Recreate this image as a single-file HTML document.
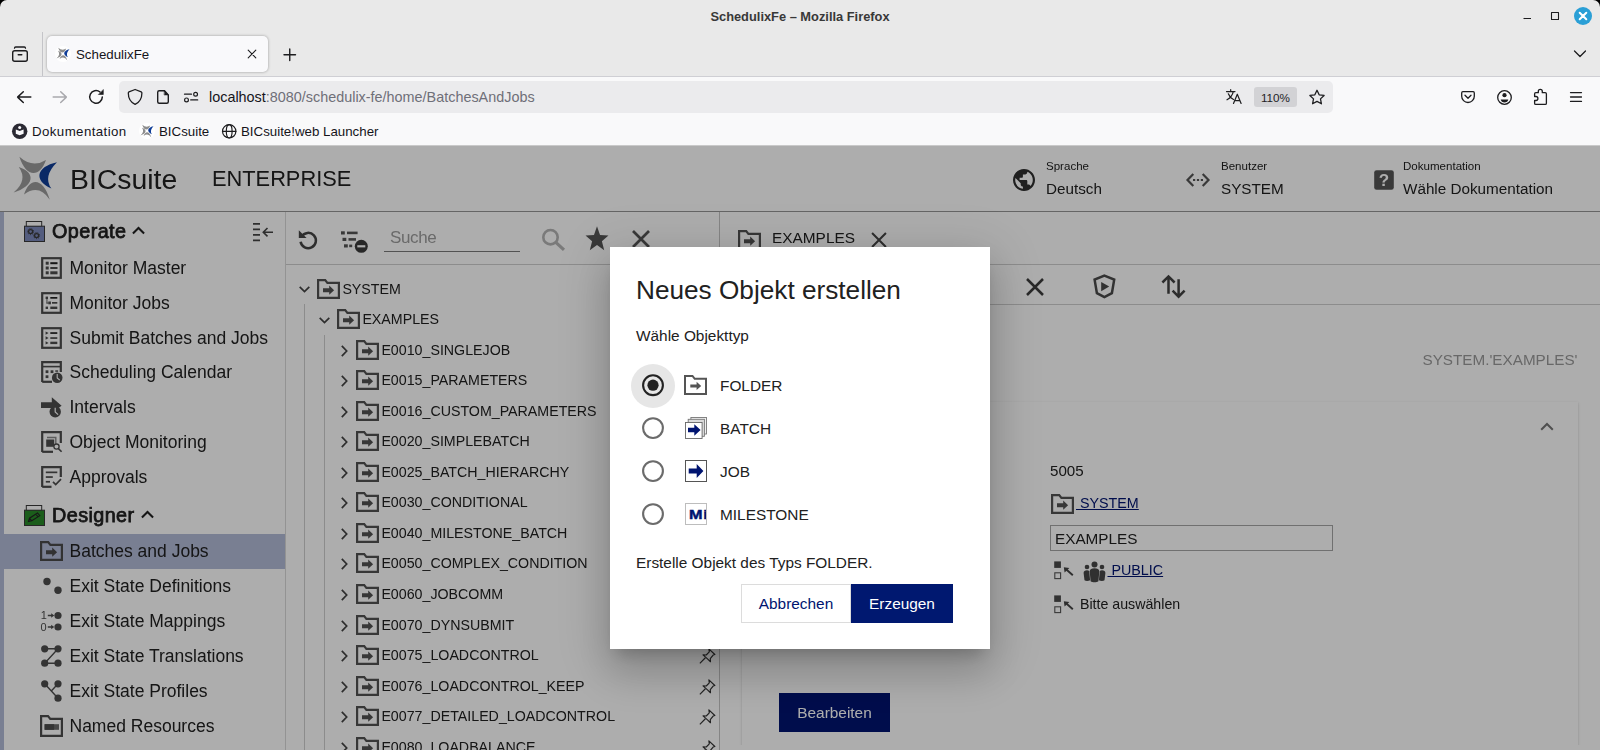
<!DOCTYPE html>
<html lang="de">
<head>
<meta charset="utf-8">
<title>SchedulixFe</title>
<style>
*{box-sizing:border-box;margin:0;padding:0}
html,body{width:1600px;height:750px;overflow:hidden;background:#000;font-family:"Liberation Sans",sans-serif;color:#15141a}
.abs{position:absolute}
#win{position:absolute;left:0;top:0;width:1600px;height:750px;background:#e9e9e9;border-radius:7px 7px 0 0;overflow:hidden}
/* ---------- browser chrome ---------- */
#title{position:absolute;left:0;top:0;width:1600px;height:32px;text-align:center;font-weight:bold;font-size:12.850px;line-height:33px;color:#383838}
#tabbar{position:absolute;left:0;top:32px;width:1600px;height:44px;background:#e9e9e9}
#tab{position:absolute;left:47px;top:36px;width:221px;height:36px;background:#f9f9fb;border-radius:5px;box-shadow:0 0 3px rgba(0,0,0,.35)}
#tab .t{position:absolute;left:29px;top:0;line-height:37px;font-size:13.3px;color:#15141a}
#navbar{position:absolute;left:0;top:76px;width:1600px;height:69px;background:#f9f9fa;border-top:1px solid #cfcfd4}
#url{position:absolute;left:119px;top:81px;width:1214px;height:32px;background:#ebebed;border-radius:5px}
#url .u{position:absolute;left:90px;top:0;line-height:32px;font-size:14.400px;color:#6f6f78;white-space:nowrap}
#url .u b{font-weight:normal;color:#15141a}
#zoom{position:absolute;left:1254px;top:87px;width:43px;height:20px;background:#d2d2d5;border-radius:3px;font-size:11.700px;line-height:21.500px;text-align:center;color:#1f1e26}
.bm{position:absolute;top:118px;height:27px;line-height:27px;font-size:13.3px;color:#15141a;white-space:nowrap}
svg{position:absolute;overflow:visible}

/* ---------- page ---------- */
#page{position:absolute;left:0;top:145px;width:1600px;height:605px;background:#fff;overflow:hidden;will-change:transform}
#page div{white-space:nowrap}
.hl{font-size:11.550px;line-height:14px;color:#212121}
.hv{font-size:15.250px;line-height:20px;color:#212121}
.sh{font-size:19.800px;font-weight:normal;letter-spacing:0.420px;-webkit-text-stroke:0.750px #212121;line-height:28px;color:#212121}
.si{font-size:17.500px;line-height:24px;color:#212121}
.tr{font-size:14.220px;line-height:18px;color:#212121}
.lk{font-size:14.300px;line-height:20px;color:#001470;text-decoration:underline}
#dlgsh{position:absolute;left:610px;top:247px;width:380px;height:402px;background:#fff;box-shadow:0 11px 15px -7px rgba(0,0,0,.2),0 24px 38px 3px rgba(0,0,0,.14),0 9px 46px 8px rgba(0,0,0,.12)}
#dlg{position:absolute;left:610px;top:247px;width:380px;height:402px;background:#fff}
.dt{font-size:15.400px;line-height:20px;color:#212121;white-space:nowrap}
</style>
</head>
<body>
<svg width="0" height="0" style="position:absolute"><defs>
  <g id="logo">
<path d="M14.40 6.80C20.65 27.03 34.48 28.70 41.00 10.00Q27.50 18.50 14.40 6.80z" fill="#8d8d8d"/>
<path d="M13.80 17.00C31.62 22.88 28.91 36.19 8.60 42.60Q23.20 30.20 13.80 17.00z" fill="#8d8d8d"/>
<path d="M19.00 44.40C25.33 25.83 38.74 28.64 44.80 49.80Q34.10 33.50 19.00 44.40z" fill="#8d8d8d"/>
<path d="M52.00 12.20C31.19 16.67 28.28 30.40 46.40 38.60Q37.60 26.60 52.00 12.20z" fill="#0f3d97"/>
</g>
</defs></svg>
<div id="win">
  <div id="title">SchedulixFe – Mozilla Firefox</div>
  <div id="tabbar"></div>
  <div class="abs" style="left:42px;top:32px;width:1px;height:44px;background:#c4c4c8"></div>
  <div id="tab"><div class="t">SchedulixFe</div></div>
  <div id="navbar"></div>
  <div id="url"><div class="u"><b>localhost</b>:8080/schedulix-fe/home/BatchesAndJobs</div></div>
  <div id="zoom">110%</div>
  <div class="bm" style="left:32px;letter-spacing:0.400px">Dokumentation</div>
  <div class="bm" style="left:159px">BICsuite</div>
  <div class="bm" style="left:241px">BICsuite!web Launcher</div>
  
  <!-- window controls -->
  <svg style="left:0;top:0" width="1600" height="146" viewBox="0 0 1600 146" fill="none" stroke="#1d1d1f" stroke-linecap="round" stroke-linejoin="round">
    <path d="M1523.5 18.5h7.5" stroke-width="1.1" stroke-linecap="butt"/>
    <rect x="1551.5" y="12.5" width="7" height="7" stroke-width="1.1"/>
    <circle cx="1583" cy="16" r="9" fill="#2a9fd6" stroke="none"/>
    <path d="M1579.7 12.7l6.6 6.6M1586.3 12.7l-6.6 6.6" stroke="#fff" stroke-width="2"/>
    <path d="M1574.5 51l5.5 5.5 5.5-5.500" stroke-width="1.3"/>
    <!-- firefox view -->
    <rect x="12.7" y="50.7" width="14.6" height="10.6" rx="2" stroke-width="1.4"/>
    <path d="M14.5 48.2q0-1.200 1.200-1.200h8.600q1.200 0 1.200 1.200" stroke-width="1.3"/>
    <path d="M18.200 54.800h3.600" stroke-width="1.4"/>
    <!-- tab close / new tab -->
    <path d="M248.200 50.200l7.600 7.600M255.800 50.200l-7.600 7.600" stroke-width="1.100"/>
    <path d="M284 54.700h11.500M289.750 49v11.500" stroke-width="1.400"/>
    <!-- back -->
    <path d="M30.800 97.100H17.600M23.300 91.700l-5.700 5.400 5.700 5.400" stroke-width="1.500"/>
    <!-- forward (disabled) -->
    <path d="M53.200 97.100h13.200M60.700 91.700l5.700 5.400-5.700 5.400" stroke="#a9a9ad" stroke-width="1.500"/>
    <!-- reload -->
    <path d="M102.300 96.900a6.300 6.300 0 1 1-2.300-4.900" stroke-width="1.500"/>
    <path d="M103.300 89.900v4.600h-4.600z" fill="#1d1d1f" stroke-width="0.600"/>
    <!-- shield -->
    <path d="M135.100 89.500l6.100 2.400q.700.300.700 1c0 5.400-2.400 9.300-6.800 11.400-4.400-2.100-6.800-6-6.800-11.400q0-.700.700-1z" stroke-width="1.300"/>
    <!-- page -->
    <path d="M164.500 90.700h-5.300q-1.500 0-1.500 1.500v9.600q0 1.500 1.500 1.500h7.600q1.500 0 1.500-1.500v-6.800z" stroke-width="1.400"/>
    <path d="M164.500 90.700l3.800 4.300h-3.800z" fill="#1d1d1f" stroke-width="0.500"/>
    <!-- permissions -->
    <path d="M184.500 94.200h7" stroke-width="1.200"/>
    <circle cx="195.600" cy="94.200" r="1.900" stroke-width="1.200"/>
    <path d="M190.700 99.900h7" stroke-width="1.200"/>
    <circle cx="186.500" cy="99.900" r="1.900" stroke-width="1.200"/>
    <!-- translate -->
    <g stroke-width="1.200">
      <path d="M1226.500 91.600h8.500M1230.700 89.700v1.900M1233.300 91.600c-.8 3.600-3 6.300-6.300 8.200M1228.300 93.800c1 2.600 2.800 4.500 5.200 5.700"/>
      <path d="M1233.500 103.500l3.800-9.300 3.800 9.300M1234.800 100.700h5"/>
    </g>
    <!-- star -->
    <path d="M1317 90.300l2.150 4.500 4.950.65-3.600 3.400.9 4.900-4.400-2.400-4.400 2.400.9-4.900-3.600-3.400 4.950-.65z" stroke-width="1.300"/>
    <!-- pocket -->
    <path d="M1462.900 91.700h10.200q1.200 0 1.200 1.200v3.300a6.300 6.300 0 0 1-12.600 0v-3.300q0-1.200 1.200-1.200z" stroke-width="1.300"/>
    <path d="M1465 95.300l3 2.900 3-2.900" stroke-width="1.300"/>
    <!-- account -->
    <circle cx="1504.500" cy="97.500" r="6.800" stroke-width="1.300"/>
    <circle cx="1504.500" cy="95.200" r="2.100" fill="#1d1d1f" stroke="none"/>
    <path d="M1500.700 99.500h7.600a3.900 3.900 0 0 1-7.600 0z" fill="#1d1d1f" stroke="none"/>
    <!-- extensions -->
    <path d="M1538.300 92.700v-1.300a2 2 0 0 1 4 0v1.300h2.900q1.200 0 1.200 1.200v9.300q0 1.200-1.200 1.200h-9.400q-1.200 0-1.200-1.200v-2.700h1.300a2 2 0 0 0 0-4h-1.300v-2.600q0-1.200 1.200-1.200z" stroke-width="1.300"/>
    <!-- menu -->
    <path d="M1570.500 92.600h11M1570.500 97h11M1570.500 101.400h11" stroke-width="1.300"/>
    <!-- bookmark icons -->
    <circle cx="19.700" cy="131.300" r="7.700" fill="#2b2a33" stroke="none"/>
    <path d="M15.800 129.500l3.900 1.500 3.900-1.500v4.200l-3.900 1.500-3.900-1.500z" fill="#f9f9fb" stroke="none"/>
    <circle cx="19.700" cy="127.600" r="1.500" fill="#f9f9fb" stroke="none"/>
    <g stroke-width="1.200">
      <circle cx="229.200" cy="131.300" r="6.700"/>
      <ellipse cx="229.200" cy="131.300" rx="2.900" ry="6.700"/>
      <path d="M222.500 131.300h13.400"/>
    </g>
  </svg>
  <!-- favicons -->
  <svg style="left:55px;top:46px" width="16" height="16" viewBox="0 0 16 16"><circle cx="8" cy="8" r="8" fill="#fff"/><use href="#logo" transform="translate(-1.100 -0.400) scale(0.300)"/></svg>
  <svg style="left:139px;top:123px" width="16" height="16" viewBox="0 0 16 16"><circle cx="8" cy="8" r="8" fill="#fff"/><use href="#logo" transform="translate(-1.100 -0.400) scale(0.300)"/></svg>
  <!--CHROME-ICONS-END-->
  <div id="page">
<div class="abs" style="left:0;top:1px;width:1600px;height:66px;background:#fff;border-bottom:1px solid #969696"></div>
<svg style="left:5px;top:5px" width="70" height="60" viewBox="0 0 70 60">
<path d="M14.40 6.80C20.65 27.03 34.48 28.70 41.00 10.00Q27.50 18.50 14.40 6.80z" fill="#9b9b9b"/>
<path d="M13.80 17.00C31.62 22.88 28.91 36.19 8.60 42.60Q23.20 30.20 13.80 17.00z" fill="#9b9b9b"/>
<path d="M19.00 44.40C25.33 25.83 38.74 28.64 44.80 49.80Q34.10 33.50 19.00 44.40z" fill="#9b9b9b"/>
<path d="M52.00 12.20C31.19 16.67 28.28 30.40 46.40 38.60Q37.60 26.60 52.00 12.20z" fill="#0f3d97"/>
</svg>
<div class="abs" style="left:70px;top:16.800px;font-size:28.400px;line-height:34px;color:#212121">BICsuite</div>
<div class="abs" style="left:212px;top:20.100px;font-size:21.800px;line-height:28px;color:#212121">ENTERPRISE</div>
<svg style="left:1012px;top:23px" width="24" height="24" viewBox="0 0 24 24"><path fill="#2e2e2e" d="M12 1C5.930 1 1 5.930 1 12s4.930 11 11 11 11-4.930 11-11S18.070 1 12 1zm-1.100 19.720C6.560 20.180 3.200 16.480 3.200 12c0-.68.090-1.330.230-1.970L8.700 15.300v1.100c0 1.210.990 2.200 2.200 2.200v2.120zm7.590-2.790c-.290-.890-1.100-1.530-2.090-1.530h-1.100v-3.300c0-.600-.500-1.100-1.100-1.100H7.600V9.800h2.200c.600 0 1.100-.500 1.100-1.100V6.500h2.200c1.210 0 2.200-.990 2.200-2.200v-.450c3.220 1.310 5.500 4.470 5.500 8.150 0 2.290-.880 4.370-2.310 5.930z"/></svg>
<div class="abs hl" style="left:1046px;top:14px">Sprache</div>
<div class="abs hv" style="left:1046px;top:34px">Deutsch</div>
<svg style="left:1186px;top:28px" width="24" height="14" viewBox="0 0 24 14" fill="none" stroke="#555" stroke-width="2.200"><path d="M7.300 1L1.500 7l5.800 6M16.700 1l5.800 6-5.800 6"/><path d="M7 7h2.200M10.900 7h2.200M14.800 7h2.200" stroke-width="2.200"/></svg>
<div class="abs hl" style="left:1221px;top:14px">Benutzer</div>
<div class="abs hv" style="left:1221px;top:34px">SYSTEM</div>
<svg style="left:1374px;top:25px" width="20" height="20" viewBox="0 0 20 20"><rect x="0.200" y="0.200" width="19.600" height="19.600" rx="2.400" fill="#555"/><text x="10" y="16.200" font-family="Liberation Sans, sans-serif" font-weight="bold" font-size="17" text-anchor="middle" fill="#fff">?</text></svg>
<div class="abs hl" style="left:1403px;top:14px">Dokumentation</div>
<div class="abs hv" style="left:1403px;top:34px">Wähle Dokumentation</div>
<div class="abs" style="left:0;top:67px;width:4px;height:538px;background:#b3bbd8"></div>
<div class="abs" style="left:285px;top:67px;width:1px;height:538px;background:#d9d9d9"></div>
<div class="abs" style="left:4px;top:389px;width:281px;height:34.500px;background:#b3bbd8"></div>
<div class="abs sh" style="left:52px;top:71.800px">Operate</div>
<div class="abs sh" style="left:52px;top:356.300px">Designer</div>
<svg style="left:132px;top:81px" width="13" height="8.500" viewBox="0 0 14 9" fill="none" stroke="#212121" stroke-width="2.200"><path d="M1 8l6-6 6 6"/></svg>
<svg style="left:141px;top:365px" width="13" height="8.500" viewBox="0 0 14 9" fill="none" stroke="#212121" stroke-width="2.200"><path d="M1 8l6-6 6 6"/></svg>
<svg style="left:24px;top:76px" width="21" height="21" viewBox="0 0 21 21" fill="none" stroke="#3a3a3a"><rect x="2.300" y="0.500" width="15.400" height="5" stroke-width="1"/><rect x="0.500" y="5.200" width="20" height="15.300" fill="#7c89bc" stroke-width="1"/><g stroke-width="1.300"><circle cx="6.600" cy="10.600" r="2"/><circle cx="12.600" cy="14.600" r="2"/></g><g stroke-width="1" stroke-dasharray="1 1.100"><circle cx="6.600" cy="10.600" r="3"/><circle cx="12.600" cy="14.600" r="3"/></g></svg>
<svg style="left:24px;top:360px" width="21" height="21" viewBox="0 0 21 21" fill="none" stroke="#3a3a3a"><rect x="2.300" y="0.500" width="15.400" height="5" stroke-width="1"/><rect x="0.500" y="5.200" width="20" height="15.300" fill="#288a28" stroke-width="1"/><path d="M4.500 16.500l1-3.300 8-5.200 2.300 2.600-8 5.200zM12 9.300l2.200 2.700M5.500 13.200l2.300 2.600" stroke-width="1.100" stroke="#222"/></svg>
<svg style="left:252px;top:77px" width="22" height="21" viewBox="0 0 22 21" fill="none" stroke="#444" stroke-width="1.600"><path d="M1 1.900h7M1 7.400h7M1 12.900h7M1 18.400h7" stroke-width="1.800"/><path d="M21 10.200h-9.500M15.500 6L11.300 10.200l4.200 4.200"/></svg>
<div class="abs si" style="left:69.500px;top:111px">Monitor Master</div>
<svg style="left:41px;top:112px" width="21" height="22" viewBox="0 0 21 22" fill="none"><rect x="1.200" y="1.200" width="18.600" height="19.600" stroke="#4d4d4d" stroke-width="2.200" fill="none"/><g fill="#4d4d4d"><rect x="4.700" y="4.700" width="3" height="3"/><rect x="4.700" y="9.500" width="3" height="3"/><rect x="4.700" y="14.300" width="3" height="3"/><rect x="9.300" y="5.200" width="7.200" height="2" fill="#222"/><rect x="9.300" y="10" width="7.200" height="2"/><rect x="9.300" y="14.300" width="7.200" height="3"/></g></svg>
<div class="abs si" style="left:69.500px;top:146px">Monitor Jobs</div>
<svg style="left:41px;top:147px" width="21" height="22" viewBox="0 0 21 22" fill="none"><rect x="1.200" y="1.200" width="18.600" height="19.600" stroke="#4d4d4d" stroke-width="2.200" fill="none"/><g fill="#4d4d4d"><rect x="4.600" y="4.600" width="2.400" height="2.400"/><rect x="7.300" y="9.500" width="2.600" height="2.800"/><rect x="4.600" y="14.600" width="2.400" height="2.400"/><rect x="9.300" y="5" width="7" height="1.700" fill="#222"/><rect x="11" y="10" width="5.300" height="1.700"/><rect x="9.300" y="14.600" width="7" height="2.400"/><rect x="5.500" y="7" width="0.900" height="4.500"/><rect x="5.500" y="10.600" width="2" height="0.900"/></g></svg>
<div class="abs si" style="left:69.500px;top:181px">Submit Batches and Jobs</div>
<svg style="left:41px;top:182px" width="21" height="22" viewBox="0 0 21 22" fill="none"><rect x="1.200" y="1.200" width="18.600" height="19.600" stroke="#4d4d4d" stroke-width="2.200" fill="none"/><g fill="#4d4d4d"><path d="M4.600 4.400l3 1.700-3 1.700zM4.600 9.300l3 1.700-3 1.700zM4.600 14.200l3 1.700-3 1.700z"/><rect x="9.300" y="5.200" width="7" height="1.700" fill="#222"/><rect x="9.300" y="10.200" width="7" height="1.700"/><rect x="9.300" y="14.700" width="7" height="2.400"/></g></svg>
<div class="abs si" style="left:69.500px;top:215px">Scheduling Calendar</div>
<svg style="left:41px;top:216px" width="21" height="22" viewBox="0 0 21 22" fill="none"><path d="M1.200 21V1.200h18.600V11" stroke="#4d4d4d" stroke-width="2.200" fill="none"/><path d="M1.200 20.800H11" stroke="#4d4d4d" stroke-width="2.200"/><rect x="2" y="4.800" width="17" height="1.600" fill="#4d4d4d"/><g fill="#4d4d4d"><rect x="4.600" y="9.300" width="2.800" height="2.800"/><rect x="9.600" y="9.300" width="2.800" height="2.800"/><rect x="14.300" y="9.300" width="2.800" height="1.500"/><rect x="4.600" y="14.300" width="2.800" height="2.800"/></g><circle cx="16.200" cy="16.700" r="5.300" fill="#4d4d4d"/><path d="M16.200 13v3.900l2.600 2.300" stroke="#fff" stroke-width="1.100" fill="none"/></svg>
<div class="abs si" style="left:69.500px;top:250px">Intervals</div>
<svg style="left:41px;top:251px" width="21" height="22" viewBox="0 0 21 22" fill="none"><path d="M0 6.200h10.800V1.200l9.800 8.600-3.200 2.200H0z" fill="#4d4d4d"/><circle cx="14.200" cy="15.800" r="5.700" fill="#4d4d4d"/><path d="M14.200 11.700v4.300l2.900 2.600" stroke="#fff" stroke-width="1.200" fill="none"/></svg>
<div class="abs si" style="left:69.500px;top:285px">Object Monitoring</div>
<svg style="left:41px;top:286px" width="21" height="22" viewBox="0 0 21 22" fill="none"><path d="M1.200 21V1.200h18.600V12" stroke="#4d4d4d" stroke-width="2.200" fill="none"/><path d="M1.200 20.800H12" stroke="#4d4d4d" stroke-width="2.200"/><path d="M5.200 8.500h8v7.300h-8z" fill="#4d4d4d"/><path d="M6 6.500h8.800v7" stroke="#888" stroke-width="1.400" fill="none"/><circle cx="15.500" cy="15.600" r="2.600" stroke="#4d4d4d" stroke-width="1.300" fill="#fff"/><path d="M17.400 17.600l3.200 3.200" stroke="#4d4d4d" stroke-width="1.600"/></svg>
<div class="abs si" style="left:69.500px;top:320px">Approvals</div>
<svg style="left:41px;top:321px" width="21" height="22" viewBox="0 0 21 22" fill="none"><path d="M1.200 21V1.200h18.600V11" stroke="#4d4d4d" stroke-width="2.200" fill="none"/><path d="M1.200 20.800H10.500" stroke="#4d4d4d" stroke-width="2.200"/><g fill="#4d4d4d"><rect x="4.800" y="5.500" width="11.500" height="1.700"/><rect x="4.800" y="10.200" width="7" height="1.700"/><rect x="4.800" y="14.900" width="4.200" height="1.700"/></g><path d="M12 15.800l2.700 2.700 5.300-5.300" stroke="#4d4d4d" stroke-width="1.700" fill="none"/></svg>
<div class="abs si" style="left:69.500px;top:394px">Batches and Jobs</div>
<svg style="left:40px;top:396px" width="23" height="20" viewBox="0 0 23 20" fill="none"><path d="M1.100 18.900V1.100h7.100l2.200 2.800h11.500v15z" stroke="#4a4a4a" stroke-width="2.2" stroke-linejoin="miter"/><path d="M6 9.200h6.200V6.600l4.900 4.600-4.900 4.600v-2.600H6z" fill="#4a4a4a"/></svg>
<div class="abs si" style="left:69.500px;top:429px">Exit State Definitions</div>
<svg style="left:41px;top:430px" width="21" height="22" viewBox="0 0 21 22" fill="none"><circle cx="6" cy="6.500" r="3.700" fill="#4d4d4d"/><circle cx="17" cy="15.200" r="3.700" fill="#4d4d4d"/></svg>
<div class="abs si" style="left:69.500px;top:464px">Exit State Mappings</div>
<svg style="left:41px;top:465px" width="21" height="22" viewBox="0 0 21 22" fill="none"><g fill="#4d4d4d"><circle cx="17" cy="5.500" r="3.600"/><circle cx="17" cy="17" r="3.600"/><path d="M6.800 4.800h3.400V3.300l3 2.200-3 2.200V6.200H6.800zM6.800 16.300h3.400v-1.500l3 2.200-3 2.200v-1.500H6.800z"/></g><text x="-0.300" y="9.300" font-size="11" fill="#4d4d4d" font-family="Liberation Sans, sans-serif">1</text><text x="-0.500" y="21" font-size="11" fill="#4d4d4d" font-family="Liberation Sans, sans-serif">0</text></svg>
<div class="abs si" style="left:69.500px;top:499px">Exit State Translations</div>
<svg style="left:41px;top:500px" width="21" height="22" viewBox="0 0 21 22" fill="none"><g fill="#4d4d4d"><circle cx="3.700" cy="3.800" r="3.600"/><circle cx="17" cy="3.800" r="3.600"/><circle cx="3.700" cy="18.200" r="3.600"/><circle cx="17" cy="18.200" r="3.600"/></g><path d="M3.700 3.800H17L3.700 18.200H17" stroke="#4d4d4d" stroke-width="1.400" fill="none"/></svg>
<div class="abs si" style="left:69.500px;top:534px">Exit State Profiles</div>
<svg style="left:41px;top:535px" width="21" height="22" viewBox="0 0 21 22" fill="none"><g fill="#4d4d4d"><circle cx="3.700" cy="3.800" r="3.600"/><circle cx="17" cy="3.800" r="3.600"/><circle cx="17" cy="18.200" r="3.600"/></g><path d="M3.700 3.800L17 18.200M17 3.800l-6.700 7.200" stroke="#4d4d4d" stroke-width="1.400" fill="none"/></svg>
<div class="abs si" style="left:69.500px;top:569px">Named Resources</div>
<svg style="left:40px;top:570px" width="23" height="22" viewBox="0 0 23 22" fill="none"><path d="M1.100 20.900V1.100h6.900l2.300 2.800h11.600v17z" stroke="#4d4d4d" stroke-width="2.200" fill="none" stroke-linejoin="miter"/><rect x="4.600" y="9.200" width="14.400" height="5.600" fill="#6a6a6a"/><rect x="4.600" y="9.200" width="9.500" height="5.600" fill="#4d4d4d"/></svg>
<div class="abs" style="left:286px;top:119px;width:433px;height:1px;background:#cfcfcf"></div>
<div class="abs" style="left:719px;top:67px;width:1px;height:538px;background:#c4c4c4"></div>
<svg style="left:298px;top:84px" width="21" height="22" viewBox="0 0 21 22" fill="none" stroke="#444" stroke-width="2.500"><path d="M3.600 7.600A7.700 7.700 0 1 1 2.600 12.800"/><path d="M0.800 1.200V9h7.800z" fill="#444" stroke="none"/></svg>
<svg style="left:341px;top:86px" width="28" height="23" viewBox="0 0 28 23"><g fill="#555"><rect x="0" y="0.300" width="3.800" height="3.200"/><rect x="6" y="0.600" width="10.600" height="2.600"/><rect x="1.500" y="6.800" width="3.800" height="3.200"/><rect x="7.500" y="7.100" width="7.500" height="2.600"/><rect x="3" y="13.300" width="3.800" height="3.200"/><rect x="8.200" y="13.600" width="3" height="2.600"/></g><circle cx="20.300" cy="15.300" r="6.500" fill="#3a3a3a"/><rect x="16.300" y="14.200" width="8" height="2.200" fill="#fff"/></svg>
<div class="abs" style="left:390px;top:81.300px;font-size:17px;line-height:24px;color:#9c9c9c;letter-spacing:-0.350px">Suche</div>
<div class="abs" style="left:384px;top:106px;width:136px;height:1px;background:#7a7a7a"></div>
<svg style="left:541px;top:83px" width="25" height="24" viewBox="0 0 25 24" fill="none" stroke="#b4b4b4"><circle cx="9.500" cy="9.200" r="7.200" stroke-width="2.600"/><path d="M14.800 14.300l8.200 7.600" stroke-width="3.200"/></svg>
<svg style="left:584.500px;top:81px" width="24" height="25" viewBox="0 0 23 22" preserveAspectRatio="none"><path d="M11.500 0.300l2.900 7.600 8.100.4-6.300 5.100 2.200 7.900-6.900-4.500-6.900 4.500 2.200-7.900L.5 8.300l8.100-.4z" fill="#555"/></svg>
<svg style="left:632px;top:85px" width="18" height="18" viewBox="0 0 18 18" fill="none" stroke="#555" stroke-width="2.700"><path d="M1 1l16 16M17 1L1 17"/></svg>
<div class="abs" style="left:304px;top:159px;width:1px;height:446px;background:#cfcfcf"></div>
<div class="abs" style="left:324px;top:190px;width:1px;height:415px;background:#cfcfcf"></div>
<svg style="left:299px;top:141px" width="11" height="7" viewBox="0 0 11 7" fill="none" stroke="#444" stroke-width="1.700"><path d="M0.700 0.800l4.800 4.800 4.800-4.800"/></svg>
<svg style="left:317px;top:134px" width="23" height="20" viewBox="0 0 23 20" fill="none"><path d="M1.100 18.900V1.100h7.100l2.200 2.800h11.500v15z" stroke="#525252" stroke-width="2.2" stroke-linejoin="miter"/><path d="M6 9.200h6.200V6.600l4.900 4.600-4.900 4.600v-2.600H6z" fill="#525252"/></svg>
<div class="abs tr" style="left:342.400px;top:135px">SYSTEM</div>
<svg style="left:319px;top:172px" width="11" height="7" viewBox="0 0 11 7" fill="none" stroke="#444" stroke-width="1.700"><path d="M0.700 0.800l4.800 4.800 4.800-4.800"/></svg>
<svg style="left:337px;top:164px" width="23" height="20" viewBox="0 0 23 20" fill="none"><path d="M1.100 18.900V1.100h7.100l2.200 2.800h11.500v15z" stroke="#525252" stroke-width="2.2" stroke-linejoin="miter"/><path d="M6 9.200h6.200V6.600l4.900 4.600-4.900 4.600v-2.600H6z" fill="#525252"/></svg>
<div class="abs tr" style="left:362.400px;top:165px">EXAMPLES</div>
<svg style="left:341px;top:200px" width="7" height="12" viewBox="0 0 7 12" fill="none" stroke="#444" stroke-width="1.700"><path d="M0.800 0.900l4.900 5.100-4.900 5.100"/></svg>
<svg style="left:356px;top:195px" width="23" height="20" viewBox="0 0 23 20" fill="none"><path d="M1.100 18.900V1.100h7.100l2.200 2.800h11.500v15z" stroke="#525252" stroke-width="2.2" stroke-linejoin="miter"/><path d="M6 9.200h6.200V6.600l4.900 4.600-4.900 4.600v-2.600H6z" fill="#525252"/></svg>
<div class="abs tr" style="left:381.400px;top:196px">E0010_SINGLEJOB</div>
<svg style="left:699px;top:198px" width="17" height="17" viewBox="0 0 16 16" fill="none" stroke="#333" stroke-width="1.100" stroke-linejoin="round"><path d="M9.300 0.800l5.600 5.300-1.600.5-2.700 3.300.2 3-2.800-2.700L3.800 6.500l3 .1 2.900-3z"/><path d="M6 9.200L0.800 14.500"/></svg>
<svg style="left:341px;top:230px" width="7" height="12" viewBox="0 0 7 12" fill="none" stroke="#444" stroke-width="1.700"><path d="M0.800 0.900l4.900 5.100-4.900 5.100"/></svg>
<svg style="left:356px;top:225px" width="23" height="20" viewBox="0 0 23 20" fill="none"><path d="M1.100 18.900V1.100h7.100l2.200 2.800h11.500v15z" stroke="#525252" stroke-width="2.2" stroke-linejoin="miter"/><path d="M6 9.200h6.200V6.600l4.900 4.600-4.900 4.600v-2.600H6z" fill="#525252"/></svg>
<div class="abs tr" style="left:381.400px;top:226px">E0015_PARAMETERS</div>
<svg style="left:699px;top:228px" width="17" height="17" viewBox="0 0 16 16" fill="none" stroke="#333" stroke-width="1.100" stroke-linejoin="round"><path d="M9.300 0.800l5.600 5.300-1.600.5-2.700 3.300.2 3-2.800-2.700L3.800 6.500l3 .1 2.900-3z"/><path d="M6 9.200L0.800 14.500"/></svg>
<svg style="left:341px;top:261px" width="7" height="12" viewBox="0 0 7 12" fill="none" stroke="#444" stroke-width="1.700"><path d="M0.800 0.900l4.900 5.100-4.900 5.100"/></svg>
<svg style="left:356px;top:256px" width="23" height="20" viewBox="0 0 23 20" fill="none"><path d="M1.100 18.900V1.100h7.100l2.200 2.800h11.500v15z" stroke="#525252" stroke-width="2.2" stroke-linejoin="miter"/><path d="M6 9.200h6.200V6.600l4.900 4.600-4.900 4.600v-2.600H6z" fill="#525252"/></svg>
<div class="abs tr" style="left:381.400px;top:257px">E0016_CUSTOM_PARAMETERS</div>
<svg style="left:699px;top:259px" width="17" height="17" viewBox="0 0 16 16" fill="none" stroke="#333" stroke-width="1.100" stroke-linejoin="round"><path d="M9.300 0.800l5.600 5.300-1.600.5-2.700 3.300.2 3-2.800-2.700L3.800 6.500l3 .1 2.900-3z"/><path d="M6 9.200L0.800 14.500"/></svg>
<svg style="left:341px;top:291px" width="7" height="12" viewBox="0 0 7 12" fill="none" stroke="#444" stroke-width="1.700"><path d="M0.800 0.900l4.900 5.100-4.900 5.100"/></svg>
<svg style="left:356px;top:286px" width="23" height="20" viewBox="0 0 23 20" fill="none"><path d="M1.100 18.900V1.100h7.100l2.200 2.800h11.500v15z" stroke="#525252" stroke-width="2.2" stroke-linejoin="miter"/><path d="M6 9.200h6.200V6.600l4.900 4.600-4.900 4.600v-2.600H6z" fill="#525252"/></svg>
<div class="abs tr" style="left:381.400px;top:287px">E0020_SIMPLEBATCH</div>
<svg style="left:699px;top:289px" width="17" height="17" viewBox="0 0 16 16" fill="none" stroke="#333" stroke-width="1.100" stroke-linejoin="round"><path d="M9.300 0.800l5.600 5.300-1.600.5-2.700 3.300.2 3-2.800-2.700L3.800 6.500l3 .1 2.900-3z"/><path d="M6 9.200L0.800 14.500"/></svg>
<svg style="left:341px;top:322px" width="7" height="12" viewBox="0 0 7 12" fill="none" stroke="#444" stroke-width="1.700"><path d="M0.800 0.900l4.900 5.100-4.900 5.100"/></svg>
<svg style="left:356px;top:317px" width="23" height="20" viewBox="0 0 23 20" fill="none"><path d="M1.100 18.900V1.100h7.100l2.200 2.800h11.500v15z" stroke="#525252" stroke-width="2.2" stroke-linejoin="miter"/><path d="M6 9.200h6.200V6.600l4.900 4.600-4.900 4.600v-2.600H6z" fill="#525252"/></svg>
<div class="abs tr" style="left:381.400px;top:318px">E0025_BATCH_HIERARCHY</div>
<svg style="left:699px;top:320px" width="17" height="17" viewBox="0 0 16 16" fill="none" stroke="#333" stroke-width="1.100" stroke-linejoin="round"><path d="M9.300 0.800l5.600 5.300-1.600.5-2.700 3.300.2 3-2.800-2.700L3.800 6.500l3 .1 2.900-3z"/><path d="M6 9.200L0.800 14.500"/></svg>
<svg style="left:341px;top:352px" width="7" height="12" viewBox="0 0 7 12" fill="none" stroke="#444" stroke-width="1.700"><path d="M0.800 0.900l4.900 5.100-4.900 5.100"/></svg>
<svg style="left:356px;top:347px" width="23" height="20" viewBox="0 0 23 20" fill="none"><path d="M1.100 18.900V1.100h7.100l2.200 2.800h11.500v15z" stroke="#525252" stroke-width="2.2" stroke-linejoin="miter"/><path d="M6 9.200h6.200V6.600l4.900 4.600-4.900 4.600v-2.600H6z" fill="#525252"/></svg>
<div class="abs tr" style="left:381.400px;top:348px">E0030_CONDITIONAL</div>
<svg style="left:699px;top:350px" width="17" height="17" viewBox="0 0 16 16" fill="none" stroke="#333" stroke-width="1.100" stroke-linejoin="round"><path d="M9.300 0.800l5.600 5.300-1.600.5-2.700 3.300.2 3-2.800-2.700L3.800 6.500l3 .1 2.900-3z"/><path d="M6 9.200L0.800 14.500"/></svg>
<svg style="left:341px;top:383px" width="7" height="12" viewBox="0 0 7 12" fill="none" stroke="#444" stroke-width="1.700"><path d="M0.800 0.900l4.900 5.100-4.900 5.100"/></svg>
<svg style="left:356px;top:378px" width="23" height="20" viewBox="0 0 23 20" fill="none"><path d="M1.100 18.900V1.100h7.100l2.200 2.800h11.500v15z" stroke="#525252" stroke-width="2.2" stroke-linejoin="miter"/><path d="M6 9.200h6.200V6.600l4.900 4.600-4.900 4.600v-2.600H6z" fill="#525252"/></svg>
<div class="abs tr" style="left:381.400px;top:379px">E0040_MILESTONE_BATCH</div>
<svg style="left:699px;top:381px" width="17" height="17" viewBox="0 0 16 16" fill="none" stroke="#333" stroke-width="1.100" stroke-linejoin="round"><path d="M9.300 0.800l5.600 5.300-1.600.5-2.700 3.300.2 3-2.800-2.700L3.800 6.500l3 .1 2.900-3z"/><path d="M6 9.200L0.800 14.500"/></svg>
<svg style="left:341px;top:413px" width="7" height="12" viewBox="0 0 7 12" fill="none" stroke="#444" stroke-width="1.700"><path d="M0.800 0.900l4.900 5.100-4.900 5.100"/></svg>
<svg style="left:356px;top:408px" width="23" height="20" viewBox="0 0 23 20" fill="none"><path d="M1.100 18.900V1.100h7.100l2.200 2.800h11.500v15z" stroke="#525252" stroke-width="2.2" stroke-linejoin="miter"/><path d="M6 9.200h6.200V6.600l4.900 4.600-4.900 4.600v-2.600H6z" fill="#525252"/></svg>
<div class="abs tr" style="left:381.400px;top:409px">E0050_COMPLEX_CONDITION</div>
<svg style="left:699px;top:411px" width="17" height="17" viewBox="0 0 16 16" fill="none" stroke="#333" stroke-width="1.100" stroke-linejoin="round"><path d="M9.300 0.800l5.600 5.300-1.600.5-2.700 3.300.2 3-2.800-2.700L3.800 6.500l3 .1 2.900-3z"/><path d="M6 9.200L0.800 14.500"/></svg>
<svg style="left:341px;top:444px" width="7" height="12" viewBox="0 0 7 12" fill="none" stroke="#444" stroke-width="1.700"><path d="M0.800 0.900l4.900 5.100-4.900 5.100"/></svg>
<svg style="left:356px;top:439px" width="23" height="20" viewBox="0 0 23 20" fill="none"><path d="M1.100 18.900V1.100h7.100l2.200 2.800h11.500v15z" stroke="#525252" stroke-width="2.2" stroke-linejoin="miter"/><path d="M6 9.200h6.200V6.600l4.900 4.600-4.900 4.600v-2.600H6z" fill="#525252"/></svg>
<div class="abs tr" style="left:381.400px;top:440px">E0060_JOBCOMM</div>
<svg style="left:699px;top:442px" width="17" height="17" viewBox="0 0 16 16" fill="none" stroke="#333" stroke-width="1.100" stroke-linejoin="round"><path d="M9.300 0.800l5.600 5.300-1.600.5-2.700 3.300.2 3-2.800-2.700L3.800 6.500l3 .1 2.900-3z"/><path d="M6 9.200L0.800 14.500"/></svg>
<svg style="left:341px;top:475px" width="7" height="12" viewBox="0 0 7 12" fill="none" stroke="#444" stroke-width="1.700"><path d="M0.800 0.900l4.900 5.100-4.900 5.100"/></svg>
<svg style="left:356px;top:470px" width="23" height="20" viewBox="0 0 23 20" fill="none"><path d="M1.100 18.900V1.100h7.100l2.200 2.800h11.500v15z" stroke="#525252" stroke-width="2.2" stroke-linejoin="miter"/><path d="M6 9.200h6.200V6.600l4.900 4.600-4.900 4.600v-2.600H6z" fill="#525252"/></svg>
<div class="abs tr" style="left:381.400px;top:471px">E0070_DYNSUBMIT</div>
<svg style="left:699px;top:473px" width="17" height="17" viewBox="0 0 16 16" fill="none" stroke="#333" stroke-width="1.100" stroke-linejoin="round"><path d="M9.300 0.800l5.600 5.300-1.600.5-2.700 3.300.2 3-2.800-2.700L3.800 6.500l3 .1 2.900-3z"/><path d="M6 9.200L0.800 14.500"/></svg>
<svg style="left:341px;top:505px" width="7" height="12" viewBox="0 0 7 12" fill="none" stroke="#444" stroke-width="1.700"><path d="M0.800 0.900l4.900 5.100-4.900 5.100"/></svg>
<svg style="left:356px;top:500px" width="23" height="20" viewBox="0 0 23 20" fill="none"><path d="M1.100 18.900V1.100h7.100l2.200 2.800h11.500v15z" stroke="#525252" stroke-width="2.2" stroke-linejoin="miter"/><path d="M6 9.200h6.200V6.600l4.900 4.600-4.900 4.600v-2.600H6z" fill="#525252"/></svg>
<div class="abs tr" style="left:381.400px;top:501px">E0075_LOADCONTROL</div>
<svg style="left:699px;top:503px" width="17" height="17" viewBox="0 0 16 16" fill="none" stroke="#333" stroke-width="1.100" stroke-linejoin="round"><path d="M9.300 0.800l5.600 5.300-1.600.5-2.700 3.300.2 3-2.800-2.700L3.800 6.500l3 .1 2.900-3z"/><path d="M6 9.200L0.800 14.500"/></svg>
<svg style="left:341px;top:536px" width="7" height="12" viewBox="0 0 7 12" fill="none" stroke="#444" stroke-width="1.700"><path d="M0.800 0.900l4.900 5.100-4.900 5.100"/></svg>
<svg style="left:356px;top:531px" width="23" height="20" viewBox="0 0 23 20" fill="none"><path d="M1.100 18.900V1.100h7.100l2.200 2.800h11.500v15z" stroke="#525252" stroke-width="2.2" stroke-linejoin="miter"/><path d="M6 9.200h6.200V6.600l4.900 4.600-4.900 4.600v-2.600H6z" fill="#525252"/></svg>
<div class="abs tr" style="left:381.400px;top:532px">E0076_LOADCONTROL_KEEP</div>
<svg style="left:699px;top:534px" width="17" height="17" viewBox="0 0 16 16" fill="none" stroke="#333" stroke-width="1.100" stroke-linejoin="round"><path d="M9.300 0.800l5.600 5.300-1.600.5-2.700 3.300.2 3-2.800-2.700L3.800 6.500l3 .1 2.900-3z"/><path d="M6 9.200L0.800 14.500"/></svg>
<svg style="left:341px;top:566px" width="7" height="12" viewBox="0 0 7 12" fill="none" stroke="#444" stroke-width="1.700"><path d="M0.800 0.900l4.900 5.100-4.900 5.100"/></svg>
<svg style="left:356px;top:561px" width="23" height="20" viewBox="0 0 23 20" fill="none"><path d="M1.100 18.900V1.100h7.100l2.200 2.800h11.500v15z" stroke="#525252" stroke-width="2.2" stroke-linejoin="miter"/><path d="M6 9.200h6.200V6.600l4.900 4.600-4.900 4.600v-2.600H6z" fill="#525252"/></svg>
<div class="abs tr" style="left:381.400px;top:562px">E0077_DETAILED_LOADCONTROL</div>
<svg style="left:699px;top:564px" width="17" height="17" viewBox="0 0 16 16" fill="none" stroke="#333" stroke-width="1.100" stroke-linejoin="round"><path d="M9.300 0.800l5.600 5.300-1.600.5-2.700 3.300.2 3-2.800-2.700L3.800 6.500l3 .1 2.900-3z"/><path d="M6 9.200L0.800 14.500"/></svg>
<svg style="left:341px;top:597px" width="7" height="12" viewBox="0 0 7 12" fill="none" stroke="#444" stroke-width="1.700"><path d="M0.800 0.900l4.900 5.100-4.900 5.100"/></svg>
<svg style="left:356px;top:592px" width="23" height="20" viewBox="0 0 23 20" fill="none"><path d="M1.100 18.900V1.100h7.100l2.200 2.800h11.500v15z" stroke="#525252" stroke-width="2.2" stroke-linejoin="miter"/><path d="M6 9.200h6.200V6.600l4.900 4.600-4.900 4.600v-2.600H6z" fill="#525252"/></svg>
<div class="abs tr" style="left:381.400px;top:593px">E0080_LOADBALANCE</div>
<svg style="left:699px;top:595px" width="17" height="17" viewBox="0 0 16 16" fill="none" stroke="#333" stroke-width="1.100" stroke-linejoin="round"><path d="M9.300 0.800l5.600 5.300-1.600.5-2.700 3.300.2 3-2.800-2.700L3.800 6.500l3 .1 2.900-3z"/><path d="M6 9.200L0.800 14.500"/></svg>
<div class="abs" style="left:720px;top:119px;width:880px;height:1px;background:#cfcfcf"></div>
<div class="abs" style="left:720px;top:159px;width:880px;height:1px;background:#cfcfcf"></div>
<svg style="left:738px;top:85px" width="23" height="20" viewBox="0 0 23 20" fill="none"><path d="M1.100 18.900V1.100h7.100l2.200 2.800h11.500v15z" stroke="#525252" stroke-width="2.2" stroke-linejoin="miter"/><path d="M6 9.200h6.200V6.600l4.900 4.600-4.900 4.600v-2.600H6z" fill="#525252"/></svg>
<div class="abs" style="left:772px;top:83px;font-size:15.400px;line-height:20px;color:#212121">EXAMPLES</div>
<svg style="left:871.300px;top:86.500px" width="16" height="16" viewBox="0 0 15 15" fill="none" stroke="#444" stroke-width="1.900"><path d="M1 1l13 13M14 1L1 14"/></svg>
<svg style="left:1026px;top:133px" width="18" height="18" viewBox="0 0 18 18" fill="none" stroke="#3d3d3d" stroke-width="2.500"><path d="M1 1l16 16M17 1L1 17"/></svg>
<svg style="left:1093px;top:129px" width="23" height="25" viewBox="0 0 23 25" fill="none" stroke="#4a4a4a" stroke-width="2.500" stroke-linejoin="miter"><path d="M11.400 1.600l9.800 4-2.300 13.600-7.500 4-7.500-4L1.600 5.600z"/><path d="M8.200 8v9.200l8-4.600z" fill="#4a4a4a" stroke="none"/></svg>
<svg style="left:1161px;top:129px" width="25" height="25" viewBox="0 0 25 25" fill="none" stroke="#424242" stroke-width="2.500"><path d="M7.500 19.800V2.600M1.400 8.500l6.100-6.100 6.100 6.100M17.600 5.200v17.300M11.600 16.700l6 6 6-6"/></svg>
<div class="abs" style="right:22.500px;top:205px;font-size:15.250px;line-height:20px;color:#9a9a9a;white-space:nowrap">SYSTEM.'EXAMPLES'</div>
<div class="abs" style="left:725px;top:250px;width:875px;height:350px;overflow:hidden"><div class="abs" style="left:16.700px;top:7.400px;width:836.300px;height:500px;background:#fff;box-shadow:0 2px 1px -1px rgba(0,0,0,.2),0 1px 1px 0 rgba(0,0,0,.14),0 1px 3px 0 rgba(0,0,0,.12)"></div></div>
<svg style="left:1540px;top:277px" width="14" height="9" viewBox="0 0 14 9" fill="none" stroke="#757575" stroke-width="2"><path d="M1.200 7.800L7 2l5.800 5.800"/></svg>
<div class="abs" style="left:1050px;top:316px;font-size:15.150px;line-height:20px;color:#212121">5005</div>
<svg style="left:1051px;top:349px" width="23" height="20" viewBox="0 0 23 20" fill="none"><path d="M1.100 18.900V1.100h7.100l2.200 2.800h11.500v15z" stroke="#525252" stroke-width="2.2" stroke-linejoin="miter"/><path d="M6 9.200h6.200V6.600l4.900 4.600-4.900 4.600v-2.600H6z" fill="#525252"/></svg>
<div class="abs lk" style="left:1076px;top:348px">&nbsp;SYSTEM</div>
<div class="abs" style="left:1050px;top:380px;width:283px;height:26px;border:1px solid #a6a6a6;font-size:15.300px;line-height:26px;padding-left:4px;color:#212121">EXAMPLES</div>
<svg style="left:1054px;top:417px" width="20" height="18" viewBox="0 0 20 18" fill="none"><rect x="0.200" y="-0.600" width="6.700" height="6.500" fill="#4a4a4a"/><rect x="0.800" y="10.800" width="5.800" height="5.800" stroke="#555" stroke-width="1.100"/><path d="M18.800 13.200L11.500 6.800" stroke="#444" stroke-width="1.900"/><path d="M9.800 5.300l5.600.600-4.800 4.500z" fill="#444"/></svg>
<svg style="left:1083px;top:415.500px" width="23" height="21.500" viewBox="0 0 23 21" fill="#484848"><circle cx="11.500" cy="3.300" r="3"/><circle cx="4" cy="5.800" r="2.300"/><circle cx="19" cy="5.800" r="2.300"/><path d="M6.700 10.200c0-2 2-3.100 4.800-3.100s4.800 1.100 4.800 3.100L15.400 20c-1 .8-2.300 1-3.900 1s-2.900-.2-3.900-1z"/><path d="M0.600 11.700c0-1.700 1.300-2.600 3.400-2.600 1 0 1.700.2 2.200.6l.9 9.300c-.8.600-1.800.8-3 .8-1.200 0-2-.3-2.600-.8zM22.400 11.700c0-1.700-1.300-2.600-3.400-2.600-1 0-1.700.2-2.200.6l-.9 9.300c.8.600 1.800.8 3 .8 1.200 0 2-.3 2.600-.8z"/></svg>
<div class="abs lk" style="left:1107.500px;top:415px">&nbsp;PUBLIC</div>
<svg style="left:1054px;top:451px" width="20" height="18" viewBox="0 0 20 18" fill="none"><rect x="0.200" y="-0.600" width="6.700" height="6.500" fill="#4a4a4a"/><rect x="0.800" y="10.800" width="5.800" height="5.800" stroke="#555" stroke-width="1.100"/><path d="M18.800 13.200L11.500 6.800" stroke="#444" stroke-width="1.900"/><path d="M9.800 5.300l5.600.600-4.800 4.500z" fill="#444"/></svg>
<div class="abs" style="left:1080px;top:449px;font-size:14.200px;line-height:20px;color:#212121">Bitte auswählen</div>
<div class="abs" style="left:779px;top:548px;width:111px;height:39px;background:#001470;color:#fff;font-size:15.400px;line-height:39px;text-align:center">Bearbeiten</div>
<div class="abs" style="left:0;top:1px;width:1600px;height:604px;background:rgba(0,0,0,.32)"></div>
<div class="abs" style="left:0;top:0;width:1600px;height:1px;background:#c9c9c9"></div>
</div>
<div id="dlgsh"></div>
<div id="dlg">
  <div class="abs" style="left:26px;top:25.700px;font-size:26.200px;line-height:34px;color:#212121;white-space:nowrap">Neues Objekt erstellen</div>
  <div class="abs dt" style="left:26px;top:79px">Wähle Objekttyp</div>
  <!-- radios -->
  <svg style="left:20px;top:116px" width="46" height="174" viewBox="0 0 46 174" fill="none">
    <circle cx="23" cy="23" r="22" fill="#e6e6e6"/>
    <circle cx="23" cy="22.200" r="9.900" stroke="#222" stroke-width="2.100"/>
    <circle cx="23" cy="22.200" r="5.600" fill="#222"/>
    <circle cx="23" cy="65.100" r="9.900" stroke="#6b6b6b" stroke-width="2.100"/>
    <circle cx="23" cy="108.100" r="9.900" stroke="#6b6b6b" stroke-width="2.100"/>
    <circle cx="23" cy="151.100" r="9.900" stroke="#6b6b6b" stroke-width="2.100"/>
  </svg>
  <!-- folder -->
  <svg style="left:74px;top:128px" width="23" height="20" viewBox="0 0 23 20" fill="none"><path d="M1 19V1h7.500l2.200 2.800h11.300V19z" stroke="#555" stroke-width="2"/><path d="M6.300 9.400h6.300V6.700l4.600 4.200-4.600 4.200v-2.700H6.300z" fill="#555"/></svg>
  <!-- batch -->
  <svg style="left:75px;top:170px" width="22" height="22" viewBox="0 0 22 22" fill="#fff" stroke="#777" stroke-width="0.900"><rect x="5.900" y="0.500" width="15.600" height="16.500" fill="#f0f0f0"/><rect x="3.200" y="2.300" width="16.200" height="17" fill="#dcdcdc"/><rect x="0.500" y="5.500" width="16.600" height="16" stroke="#666"/><path d="M3 10.700h6.300V7.300l6.300 5.700-6.300 5.700v-3.400H3z" fill="#001470" stroke="none"/></svg>
  <!-- job -->
  <svg style="left:75px;top:213px" width="22" height="22" viewBox="0 0 22 22" fill="#fff" stroke="#555" stroke-width="1"><rect x="0.500" y="0.500" width="21" height="21"/><path d="M3.700 8.400h8V4l6.700 7-6.700 7v-4.400h-8z" fill="#001470" stroke="none"/></svg>
  <!-- milestone -->
  <div class="abs" style="left:75px;top:256px;width:22px;height:22px;border:1px solid #bdbdbd;overflow:hidden;background:#fff"><div style="position:absolute;left:2.800px;top:0.600px;font-weight:bold;font-size:13.200px;line-height:20px;color:#001470;letter-spacing:0.700px;-webkit-text-stroke:0.450px #001470;transform:scaleX(1.230);transform-origin:0 0">Mi</div></div>
  <div class="abs dt" style="left:110px;top:129px">FOLDER</div>
  <div class="abs dt" style="left:110px;top:172px">BATCH</div>
  <div class="abs dt" style="left:110px;top:215px">JOB</div>
  <div class="abs dt" style="left:110px;top:258px">MILESTONE</div>
  <div class="abs dt" style="left:26px;top:306px">Erstelle Objekt des Typs FOLDER.</div>
  <div class="abs" style="left:131px;top:337px;width:110px;height:39px;border:1px solid #dcdcdc;background:#fff;color:#001470;font-size:15.400px;line-height:37px;text-align:center">Abbrechen</div>
  <div class="abs" style="left:241px;top:337px;width:102px;height:39px;background:#001870;color:#fff;font-size:15.400px;line-height:39px;text-align:center">Erzeugen</div>
</div>

</div>
</body>
</html>
